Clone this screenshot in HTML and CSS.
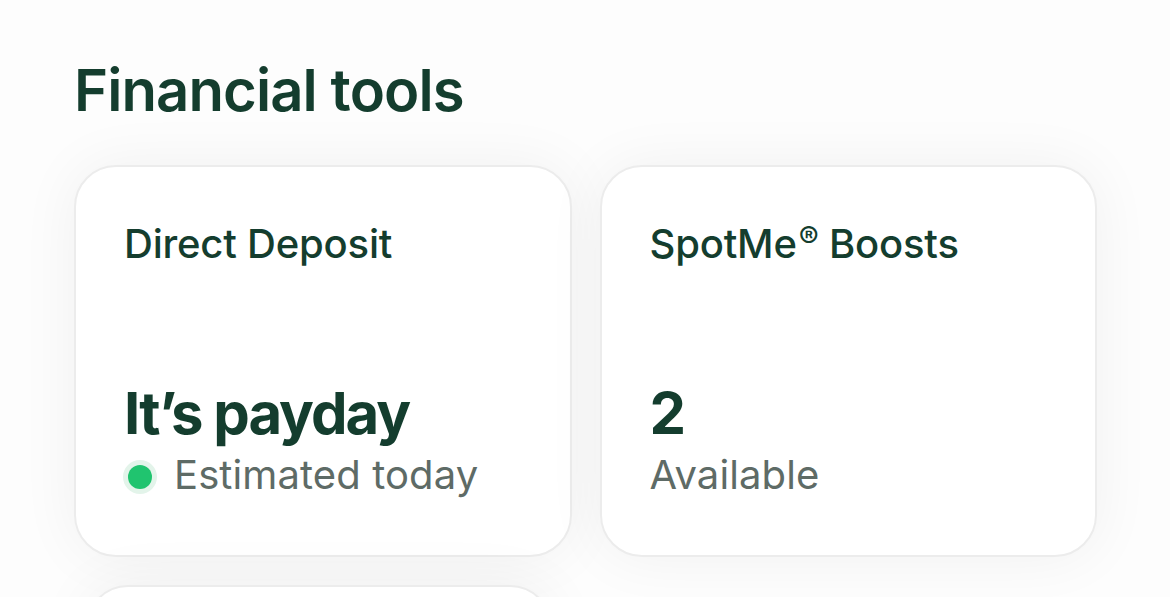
FILE: index.html
```html
<!DOCTYPE html>
<html>
<head>
<meta charset="utf-8">
<link rel="stylesheet" href="styles.css">
</head>
<body>
<main class="page">
  <h1 class="title">Financial tools</h1>
  <div class="grid">
    <section class="card">
      <div class="card-label">Direct Deposit</div>
      <div class="card-body">
        <div class="card-value">It’s payday</div>
        <div class="card-sub"><span class="dot"></span>Estimated today</div>
      </div>
    </section>
    <section class="card">
      <div class="card-label">SpotMe<sup class="reg">®</sup> Boosts</div>
      <div class="card-body">
        <div class="card-value">2</div>
        <div class="card-sub">Available</div>
      </div>
    </section>
    <section class="card card-next"></section>
  </div>
</main>
</body>
</html>
```
FILE: styles.css
```css
html, body {
  margin: 0;
  padding: 0;
  background: #fdfdfd;
  overflow: hidden;
}
.page {
  padding: 50px 73px 0 74px;
  font-family: Inter, "Noto Sans", sans-serif;
  color: #143d2e;
}
.title {
  margin: 0;
  font-size: 58px;
  font-weight: 600;
  letter-spacing: -0.9px;
  line-height: 80px;
}
.grid {
  margin-top: 35px;
  display: grid;
  grid-template-columns: 1fr 1fr;
  gap: 28px;
}
.card {
  height: 392px;
  box-sizing: border-box;
  background: #fff;
  border: 2px solid #ececec;
  border-radius: 42px;
  box-shadow: 0 0 60px rgba(0, 0, 0, 0.055);
  padding: 50px 47px 53px 48px;
  display: flex;
  flex-direction: column;
  justify-content: space-between;
}
.card-next {
  margin: 0 20px 0 12px;
}
.card-label {
  font-size: 40px;
  font-weight: 500;
  letter-spacing: -0.2px;
  line-height: 54px;
}
.reg {
  font-size: 30px;
  vertical-align: 10px;
  line-height: 0;
  margin-left: 2px;
}
.card-value {
  font-size: 58px;
  font-weight: 700;
  letter-spacing: -2px;
  line-height: 70px;
}
.card-sub {
  display: flex;
  align-items: center;
  font-size: 40px;
  font-weight: 400;
  letter-spacing: 0.1px;
  line-height: 54px;
  color: #5e6b66;
}
.dot {
  width: 24px;
  height: 24px;
  border-radius: 50%;
  background: #20c46f;
  box-shadow: 0 0 0 5px #e3f4ea;
  margin: 4px 22px 0 4px;
}
```
